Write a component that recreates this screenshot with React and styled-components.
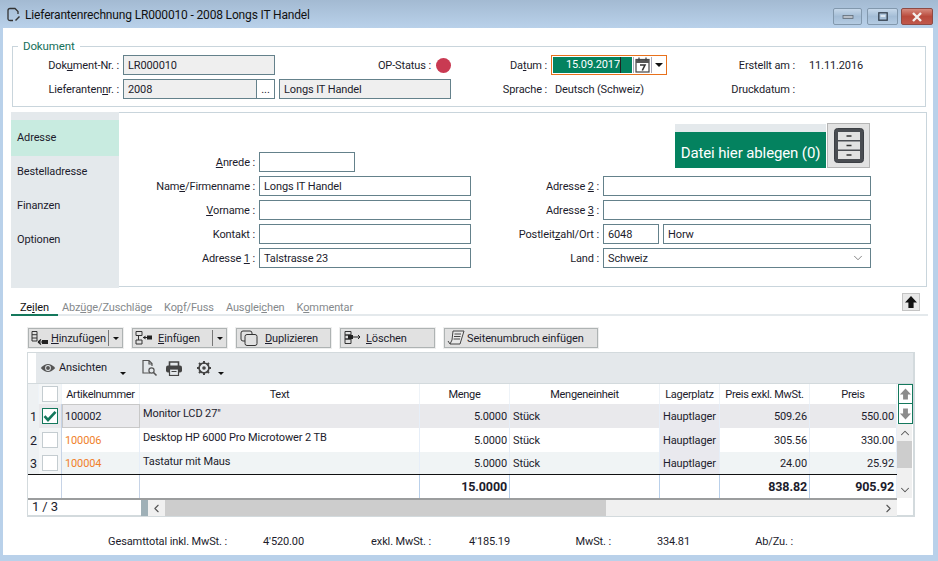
import React from "react";
import styled, { createGlobalStyle } from "styled-components";
import { ChevronDown, ChevronUp, ChevronLeft, ChevronRight } from "lucide-react";

const Global = createGlobalStyle`
  html, body { margin: 0; padding: 0; background: #b9d1ea; }
  body { font-family: Roboto, "Liberation Sans", Arial, sans-serif; font-size: 11px; letter-spacing: -.12px; color: #1c1c2c; overflow: hidden; }
  u { text-underline-offset: 1px; }
`;

const Win = styled.div`
  width: 938px; height: 561px; display: flex; flex-direction: column;
  background: #b9d1ea; box-sizing: border-box; overflow: hidden;
`;
const TitleBar = styled.header`
  height: 28px; flex: none; display: flex; align-items: center; padding: 2px 5px 0 6px; box-sizing: border-box;
  background: linear-gradient(#a3bad2, #b9d1ea);
`;
const TitleIcon = styled.svg`width: 15px; height: 16px; margin-right: 4px; flex: none;`;
const Title = styled.h1`
  margin: 0; font-weight: 400; font-size: 12px; letter-spacing: -.16px; color: #111; flex: 1;
`;
const WinButtons = styled.div`display: flex; align-self: flex-start; margin-top: 6px;`;
const WinBtn = styled.div`
  width: ${p => p.$w}px; height: 17px; margin-left: ${p => p.$ml}px; box-sizing: border-box; border: 1px solid ${p => (p.$close ? "#8e4a44" : "#8298ad")};
  border-radius: 2px; display: flex; align-items: center; justify-content: center;
  background: ${p => (p.$close ? "linear-gradient(#d68a7e, #b94a3c 50%, #c0584c)" : "linear-gradient(#c6d8ea, #a4bdd6 50%, #b4cbe2)")};
`;
const Content = styled.main`
  flex: 1; margin: 0 5px 6px 3px; background: #fff; display: flex; flex-direction: column;
  padding: 0 6px 0 8px; min-height: 0;
`;
const DocPanel = styled.section`
  position: relative; margin: 18px 1px 0 1px; height: 61px; box-sizing: border-box;
  border: 1px solid #c9d5dc; padding-top: 8px;
  display: grid; grid-template-columns: 106px 328px 92px 116px 124px 1fr; grid-auto-rows: 20px; gap: 4px;
`;
const Legend = styled.span`
  position: absolute; left: 5px; top: -8px; background: #fff; padding: 0 5px; color: #15705a; line-height: 14px; font-size: 11.5px;
`;
const Lbl = styled.label`
  display: flex; align-items: center; justify-content: flex-end; white-space: pre; padding-right: ${p => p.$pr || 0}px;
`;
const Plain = styled.span`
  display: flex; align-items: center; padding-left: ${p => p.$pl || 0}px; white-space: pre;
`;
const Input = styled.div`
  box-sizing: border-box; height: 20px; width: ${p => (p.$w ? p.$w + "px" : "100%")}; flex: ${p => (p.$grow ? 1 : "none")};
  border: 1px solid #64818b; background: ${p => (p.$ro ? "#efefef" : "#fff")};
  display: flex; align-items: center; padding: 0 4px; white-space: pre;
`;
const SpaceRow = styled.div`display: flex; align-items: center; justify-content: space-between;`;
const GapRow = styled.div`display: flex; align-items: center; gap: ${p => p.$gap || 0}px;`;
const Dot = styled.span`width: 15px; height: 15px; border-radius: 50%; background: #c93a52; margin-left: 5px; flex: none;`;
const DotWrap = styled.span`display: flex; align-items: center;`;
const Dots = styled.div`
  box-sizing: border-box; width: 18px; height: 20px; border: 1px solid #64818b; border-left: 0; margin-right: 4px;
  display: flex; align-items: flex-end; justify-content: center; padding-bottom: 4px; font-size: 11px; line-height: 8px; flex: none;
`;
const DateBox = styled.div`
  box-sizing: border-box; height: 20px; width: 116px; border: 1px solid #e8711c; padding: 1px; display: flex; align-items: stretch;
`;
const DateVal = styled.div`
  width: 79px; background: #04825f; color: #fff; text-align: right; line-height: 16px; box-sizing: border-box; padding-right: 12px;
  position: relative;
  &::after { content: ""; position: absolute; right: 11px; top: 0; bottom: 0; width: 1px; background: #222; }
`;
const CalBtn = styled.div`
  flex: none; width: 17px; margin-left: 1px; border-left: 1px solid #aab; border-right: 1px solid #aab;
  display: flex; align-items: center; justify-content: center;
`;
const Caret = styled.i`
  display: block; width: 0; height: 0; border-left: ${p => p.$s || 3}px solid transparent; border-right: ${p => p.$s || 3}px solid transparent;
  border-top: ${p => p.$s || 3}px solid #111; flex: none;
`;
const CaretCell = styled.div`flex: 1; display: flex; align-items: center; justify-content: center;`;

const AddrPanel = styled.section`display: flex; margin-top: 5px; height: 176px; flex: none;`;
const Nav = styled.nav`
  width: 108px; flex: none; background: #e4e9ec; padding-top: 8px; box-sizing: border-box;
`;
const NavItem = styled.div`
  height: ${p => (p.$on ? 36 : 34)}px; line-height: ${p => (p.$on ? 36 : 32)}px; padding-left: 6px; background: ${p => (p.$on ? "#c8ebe0" : "transparent")};
`;
const FormGrid = styled.div`
  flex: 1; height: 175px; box-sizing: border-box; border: 1px solid #c9d5dc; border-left: 0; padding-top: 10px;
  display: grid; grid-template-columns: 136px 212px 124px 268px; grid-template-rows: 25px repeat(5, 20px); column-gap: 4px; row-gap: 4px; align-content: start;
`;
const DropArea = styled.div`
  grid-column: 4; grid-row: 1 / span 2; display: flex; justify-content: flex-end; align-items: flex-start; gap: 1px; padding-right: 1px; height: 46px;
`;
const Drop = styled.div`
  width: 151px; height: 44px; margin-top: 1px; box-sizing: border-box; border-top: 8px solid #e4e9ec; background: #04825f; color: #fff;
  font-size: 15px; display: flex; align-items: center; justify-content: center; white-space: pre; padding-top: 6px;
`;
const CabinetBtn = styled.div`
  width: 43px; height: 45px; box-sizing: border-box; border: 1px solid #b5b5b5; background: #e2e2e2; display: flex; align-items: center; justify-content: center;
`;
const Col = styled.div`grid-column: ${p => p.$c}; grid-row: ${p => p.$r}; min-width: 0;`;
const SelectChevron = styled(ChevronDown)`margin-left: auto; margin-right: 1px; color: #555;`;

const TabBar = styled.div`
  position: relative; height: 26px; flex: none; display: flex; align-items: flex-end; border-bottom: 2px solid #e4e9ec; margin-right: -1px;
`;
const Tab = styled.div`
  height: 26px; box-sizing: border-box; margin-bottom: -2px; border-bottom: 2px solid ${p => (p.$on ? "#14785c" : "transparent")}; padding-top: 11px; line-height: 13px;
  padding-left: ${p => (p.$on ? 9 : 0)}px; padding-right: ${p => (p.$on ? 9 : 0)}px; margin-right: ${p => p.$mr}px; color: ${p => (p.$on ? "#111" : "#85898c")}; white-space: pre;
`;
const UpBtn = styled.div`
  position: absolute; right: 8px; top: 5px; width: 18px; height: 18px; box-sizing: border-box; border: 1px solid #c4c4c4; background: #e8e8e8;
  display: flex; align-items: center; justify-content: center;
`;
const BtnRow = styled.div`display: flex; gap: 9px; margin: 12px 0 0 17px; flex: none;`;
const TBtn = styled.button`
  all: unset; box-sizing: border-box; height: 20px; width: ${p => p.$w}px; background: #e1e1e1; border: 1px solid #aeb3b3; box-shadow: 0 0 0 1px #eeeeee;
  display: flex; align-items: center; padding-left: ${p => p.$pl ?? 2}px; white-space: pre; color: #1c1c2c; font: inherit; letter-spacing: -.12px;
`;
const BtnIcon = styled.svg`width: 18px; height: 16px; flex: none; margin-right: ${p => p.$mr ?? 6}px;`;
const Split = styled.span`
  margin-left: auto; width: 13px; height: 16px; border-left: 1px solid #777; display: flex; align-items: center; justify-content: center; flex: none;
`;
const GridPanel = styled.section`
  margin: 4px 0 0 16px; width: 888px; height: 165px; box-sizing: border-box; flex: none; border: 1px solid #d3dadd; border-width: 1px 2px 2px 1px;
  display: flex; flex-direction: column;
`;
const GridBar = styled.div`
  height: 30px; margin-left: 8px; background: #e4e8eb; display: flex; align-items: center; flex: none;
`;
const BarIcon = styled.svg`flex: none; display: block;`;
const BarText = styled.span`margin: 0 13px 0 3px; position: relative; top: -1px;`;
const GridMain = styled.div`display: flex; height: 114px; flex: none; border-top: 1px solid #d3dadd;`;
const cols = "11px 23px 78px 280px 90px 150px 60px 90px 87px";
const TableWrap = styled.div`width: 869px; flex: none; display: flex; flex-direction: column;`;
const Row = styled.div`
  display: grid; grid-template-columns: ${cols}; height: ${p => p.$h}px; flex: none; background: ${p => p.$bg || "#fff"};
  border-top: ${p => (p.$rule ? "1px solid #111" : "0")};
`;
const Cell = styled.div`
  display: flex; align-items: ${p => (p.$top ? "flex-start" : "center")}; justify-content: ${p => ({ r: "flex-end", c: "center" }[p.$a] || "flex-start")};
  padding: ${p => (p.$top ? "3px" : "0")} ${p => (p.$a === "r" ? "2px" : "0")} 0 ${p => (p.$a === "r" || p.$a === "c" ? "0" : "3px")};
  box-sizing: border-box; min-width: 0; white-space: pre;
  background: ${p => p.$bg || "transparent"}; color: ${p => p.$color || "inherit"};
  font-weight: ${p => (p.$bold ? 700 : 400)}; font-size: ${p => (p.$bold ? "12.5px" : "11px")};
  border-right: 1px solid ${p => p.$line || "#e6eef8"};
  outline: ${p => (p.$box ? "1px solid #c8c8c8" : "0")}; outline-offset: -1px;
`;
const Head = styled(Cell)`padding: 0; border-right: 1px solid #eef3f8; letter-spacing: -.3px;`;
const Check = styled.span`
  width: 16px; height: 16px; box-sizing: border-box; background: #fff; border: 1px solid ${p => (p.$on ? "#14785c" : "#c4ccd0")}; display: flex; align-items: center; justify-content: center;
`;
const RowNum = styled(Cell)`font-size: 12.5px; padding: 1px 0 0 2px; background: #eef1f3; border-right: 0;`;
const Side = styled.div`width: 16px; flex: none; display: flex; flex-direction: column; margin-left: 1px;`;
const SideBtn = styled.div`
  height: 20px; width: 15px; box-sizing: border-box; border: 1px solid #14785c; display: flex; align-items: center; justify-content: center; background: #fff; flex: none;
  & + & { border-top-width: 0; height: 20px; }
`;
const VTrack = styled.div`
  flex: 1; width: 15px; background: #f0f0f0; display: flex; flex-direction: column; align-items: center; color: #555; margin-left: -1px;
`;
const VThumb = styled.div`width: 100%; height: 27px; background: #cdcdcd; margin: 0 0 auto;`;
const HBar = styled.div`display: flex; height: 16px; border-top: 2px solid #9b9d9e; flex: none; width: 869px;`;
const Pager = styled.div`width: 113px; flex: none; padding-left: 4px; box-sizing: border-box; line-height: 13px; font-size: 13px;`;
const PagerEdge = styled.div`width: 7px; background: #9fb0b7; flex: none;`;
const HTrack = styled.div`flex: 1; background: #f0f0f0; display: flex; align-items: center; color: #555;`;
const HArrow = styled.div`width: 17px; flex: none; display: flex; align-items: center; justify-content: center;`;
const HThumb = styled.div`width: 441px; height: 100%; background: #cdcdcd; margin-right: auto; flex: none;`;
const Footer = styled.footer`
  display: grid; grid-template-columns: 216px 77px 127px 79px 101px 79px 103px; margin-top: 18px; line-height: 14px;
`;
const FootCell = styled.span`text-align: right; white-space: pre;`;

const ArrowUp = ({ c = "#111", flip }) => (
  <svg width="14" height="14" viewBox="0 0 14 14" style={flip ? { transform: "scaleY(-1)" } : undefined}>
    <path d="M7 1 L13 7.5 H9.6 V13 H4.4 V7.5 H1 Z" fill={c} />
  </svg>
);
const row = (num, on, art, artColor, text, bg) => (
  <Row $h={num === 3 ? 22 : 24} $bg={bg} key={num}>
    <RowNum>{num}</RowNum>
    <Cell $a="c" $bg={on ? "#e9e9ec" : "#f4f6f7"} $line="#c6d3e6">
      <Check $on={on}>
        {on && (
          <svg width="14" height="12" viewBox="0 0 14 12"><path d="M1.5 6.2 L5 10 L12.5 1.8" fill="none" stroke="#14785c" strokeWidth="2.6" /></svg>
        )}
      </Check>
    </Cell>
    <Cell $color={artColor} $box={on}>{art}</Cell>
    <Cell $top>{text}</Cell>
    <Cell $a="r">5.0000</Cell>
    <Cell>Stück</Cell>
    <Cell $bg="#e9e9ee">Hauptlager</Cell>
    <Cell $a="r">{num === 1 ? "509.26" : num === 2 ? "305.56" : "24.00"}</Cell>
    <Cell $a="r">{num === 1 ? "550.00" : num === 2 ? "330.00" : "25.92"}</Cell>
  </Row>
);

export default function App() {
  return (
    <Win>
      <Global />
      <TitleBar>
        <TitleIcon viewBox="0 0 15 16">
          <path d="M2 12 V3.5 Q2 1.5 4 1.5 H9 L12 4.5 V7 M2 12 Q2 13.5 4 13.5 H7" fill="none" stroke="#333" strokeWidth="1.3" />
          <path d="M9 13 L13 9 L14 10 L10 14 Z" fill="#333" />
        </TitleIcon>
        <Title>Lieferantenrechnung LR000010 - 2008 Longs IT Handel</Title>
        <WinButtons>
          <WinBtn $w={29} $ml={0}><svg width="12" height="6" viewBox="0 0 12 6"><rect x="1" y="1.5" width="10" height="3" fill="#b8bfc8" stroke="#5f6b78" strokeWidth=".8" /></svg></WinBtn>
          <WinBtn $w={31} $ml={5}><svg width="10" height="9" viewBox="0 0 10 9"><rect x=".8" y=".8" width="8.4" height="7.4" fill="none" stroke="#333f4d" strokeWidth="1.3" /><rect x="2.6" y="3" width="4.8" height="2" fill="#dfe8f2" /></svg></WinBtn>
          <WinBtn $w={32} $ml={3} $close><svg width="12" height="10" viewBox="0 0 12 10"><path d="M2 1 L10 9 M10 1 L2 9" stroke="#f4f0ee" strokeWidth="2.4" /></svg></WinBtn>
        </WinButtons>
      </TitleBar>
      <Content>
        <DocPanel>
          <Legend>Dokument</Legend>
          <Lbl>Dok<u>u</u>ment-Nr. :</Lbl>
          <SpaceRow>
            <Input $ro $w={152}>LR000010</Input>
            <DotWrap>OP-Status :<Dot /></DotWrap>
          </SpaceRow>
          <Lbl>Da<u>t</u>um :</Lbl>
          <DateBox>
            <DateVal>15.09.2017</DateVal>
            <CalBtn>
              <svg width="15" height="16" viewBox="0 0 15 16">
                <rect x="1" y="2.5" width="13" height="12.5" fill="#fff" stroke="#444" strokeWidth="1.2" />
                <rect x="1" y="2.5" width="13" height="3.5" fill="#555" />
                <path d="M4 .5 V4 M11 .5 V4" stroke="#444" strokeWidth="1.3" />
                <path d="M5 8 H10 L7.3 13.5" fill="none" stroke="#333" strokeWidth="1.6" />
              </svg>
            </CalBtn>
            <CaretCell><Caret $s={4} /></CaretCell>
          </DateBox>
          <Lbl>Erstellt am :</Lbl>
          <Plain $pl={10}>11.11.2016</Plain>

          <Lbl>Lieferanten<u>n</u>r. :</Lbl>
          <GapRow>
            <Input $ro $w={134}>2008</Input>
            <Dots>...</Dots>
            <Input $ro $w={172}>Longs IT Handel</Input>
          </GapRow>
          <Lbl>Sprache :</Lbl>
          <Plain $pl={4}>Deutsch (Schweiz)</Plain>
          <Lbl>Druckdatum :</Lbl>
          <Plain />
        </DocPanel>

        <AddrPanel>
          <Nav>
            <NavItem $on>Adresse</NavItem>
            <NavItem>Bestelladresse</NavItem>
            <NavItem>Finanzen</NavItem>
            <NavItem>Optionen</NavItem>
          </Nav>
          <FormGrid>
            <DropArea>
              <Drop>Datei hier ablegen (0)</Drop>
              <CabinetBtn>
                <svg width="32" height="37" viewBox="0 0 32 37">
                  <rect x="1.5" y="1.5" width="29" height="34" rx="3" fill="#4a4d52" stroke="#3c3f44" />
                  <rect x="5" y="5" width="22" height="8" fill="#e2e2e2" />
                  <rect x="5" y="14.5" width="22" height="8" fill="#e2e2e2" />
                  <rect x="5" y="24" width="22" height="8" fill="#e2e2e2" />
                  <path d="M13.5 9 H18.5 M13.5 18.5 H18.5 M13.5 28 H18.5" stroke="#333" strokeWidth="1.6" />
                </svg>
              </CabinetBtn>
            </DropArea>
            <Col $c={1} $r={2} as={Lbl}><u>A</u>nrede :</Col>
            <Col $c={2} $r={2}><Input $w={96} /></Col>
            <Col $c={1} $r={3} as={Lbl}>Nam<u>e</u>/Firmenname :</Col>
            <Col $c={2} $r={3}><Input>Longs IT Handel</Input></Col>
            <Col $c={1} $r={4} as={Lbl}><u>V</u>orname :</Col>
            <Col $c={2} $r={4}><Input /></Col>
            <Col $c={1} $r={5} as={Lbl}>Kontakt :</Col>
            <Col $c={2} $r={5}><Input /></Col>
            <Col $c={1} $r={6} as={Lbl}>Adresse <u>1</u> :</Col>
            <Col $c={2} $r={6}><Input>Talstrasse 23</Input></Col>

            <Col $c={3} $r={3} as={Lbl} $pr={2}>Adresse <u>2</u> :</Col>
            <Col $c={4} $r={3}><Input /></Col>
            <Col $c={3} $r={4} as={Lbl} $pr={2}>Adresse <u>3</u> :</Col>
            <Col $c={4} $r={4}><Input /></Col>
            <Col $c={3} $r={5} as={Lbl} $pr={2}>Postleit<u>z</u>ahl/Ort :</Col>
            <Col $c={4} $r={5}>
              <GapRow $gap={4}><Input $w={56}>6048</Input><Input $grow>Horw</Input></GapRow>
            </Col>
            <Col $c={3} $r={6} as={Lbl} $pr={2}>Land :</Col>
            <Col $c={4} $r={6}><Input>Schweiz<SelectChevron size={14} strokeWidth={1.2} /></Input></Col>
          </FormGrid>
        </AddrPanel>

        <TabBar>
          <Tab $on $mr={4}>Ze<u>i</u>len</Tab>
          <Tab $mr={12}>Abz<u>ü</u>ge/Zuschläge</Tab>
          <Tab $mr={12}>Ko<u>p</u>f/Fuss</Tab>
          <Tab $mr={12}>Ausglei<u>c</u>hen</Tab>
          <Tab $mr={0}>K<u>o</u>mmentar</Tab>
          <UpBtn><ArrowUp /></UpBtn>
        </TabBar>

        <BtnRow>
          <TBtn $w={95}>
            <BtnIcon $mr={2} viewBox="0 0 18 16"><path d="M1 1.5 H6 V11 H1 Z M1 4.7 H6 M1 8 H6" fill="none" stroke="#333" /><path d="M7 12 H17 M7 12 L10 9.5 M7 12 L10 14.5" stroke="#222" strokeWidth="1.2" fill="none" /><rect x="11" y="10" width="6" height="4" fill="#222" /></BtnIcon>
            <u>H</u>inzufügen
            <Split><Caret /></Split>
          </TBtn>
          <TBtn $w={95}>
            <BtnIcon $mr={5} viewBox="0 0 18 16"><path d="M1 1.5 H7 V5.5 H1 Z M1 10 H7 V14 H1 Z M3.5 5.5 V10" fill="none" stroke="#333" /><path d="M8 7.5 H17" stroke="#222" /><path d="M8 7.5 L10.5 5.5 V9.5 Z" fill="#222" /><rect x="12" y="5.5" width="5" height="4" fill="#222" /></BtnIcon>
            <u>E</u>infügen
            <Split><Caret /></Split>
          </TBtn>
          <TBtn $w={95} $pl={3}>
            <BtnIcon $mr={7} viewBox="0 0 18 16"><rect x="1" y="1" width="11" height="10" rx="2" fill="none" stroke="#333" /><rect x="5" y="4.5" width="12" height="11" rx="2" fill="#e1e1e1" stroke="#333" /></BtnIcon>
            <u>D</u>uplizieren
          </TBtn>
          <TBtn $w={95}>
            <BtnIcon $mr={5} viewBox="0 0 18 16"><path d="M2 1.5 H8 V5 H2 Z M2 5 H8 V9 H2 Z M2 9 H8 V13.5 H2 Z" fill="none" stroke="#333" /><rect x="5" y="5" width="5" height="4" fill="#222" /><path d="M10 7 H17 M15 5 L17 7 L15 9" stroke="#222" fill="none" /></BtnIcon>
            <u>L</u>öschen
          </TBtn>
          <TBtn $w={154}>
            <BtnIcon $mr={2} viewBox="0 0 18 16"><path d="M6 1 H17 L13 14 H3 L5 10 Z" fill="#e8e8e8" stroke="#444" /><path d="M7.5 4 H14 M7 6.5 H13.5 M6.5 9 H13" stroke="#444" /><path d="M1 11 L3 14" stroke="#444" /></BtnIcon>
            Seitenumbruch einfügen
          </TBtn>
        </BtnRow>

        <GridPanel>
          <GridBar>
            <BarIcon width="16" height="12" viewBox="0 0 20 14" style={{ marginLeft: 4 }}>
              <path d="M1 7 Q10 -3 19 7 Q10 17 1 7 Z" fill="#555" />
              <circle cx="10" cy="7" r="3.6" fill="#e4e8eb" />
              <circle cx="10" cy="7" r="2.4" fill="#555" />
            </BarIcon>
            <BarText>Ansichten</BarText>
            <Caret style={{ marginTop: 10, marginRight: 15 }} />
            <BarIcon width="17" height="18" viewBox="0 0 17 18" style={{ marginRight: 8 }}>
              <path d="M9 14 H2 V1.5 H8 L11 4.5 V7 M8 1.5 V5 H11" fill="none" stroke="#555" strokeWidth="1.2" />
              <circle cx="10.5" cy="11.5" r="2.6" fill="none" stroke="#555" strokeWidth="1.2" />
              <path d="M12.5 13.5 L15.5 16.5" stroke="#555" strokeWidth="1.6" />
            </BarIcon>
            <BarIcon width="16" height="15" viewBox="0 0 16 15" style={{ marginRight: 15 }}>
              <path d="M3.5 5 V1 H12.5 V5" fill="none" stroke="#444" strokeWidth="1.6" />
              <rect x="0" y="4.5" width="16" height="7" rx="2" fill="#444" />
              <rect x="3.5" y="8" width="9" height="6.5" fill="#e4e8eb" stroke="#444" strokeWidth="1.2" />
              <path d="M5.5 10.5 H10.5" stroke="#444" />
            </BarIcon>
            <BarIcon width="14" height="14" viewBox="0 0 14 14" style={{ marginRight: 7 }}>
              <path d="M7 2 A5 5 0 1 1 6.99 2 Z" fill="none" stroke="#444" strokeWidth="1.6" />
              <path d="M7 0 V3 M7 11 V14 M0 7 H3 M11 7 H14 M2 2 L4 4 M10 10 L12 12 M12 2 L10 4 M2 12 L4 10" stroke="#444" strokeWidth="2" />
              <circle cx="7" cy="7" r="1.8" fill="#444" />
            </BarIcon>
            <Caret style={{ marginTop: 10 }} />
          </GridBar>
          <GridMain>
            <TableWrap>
              <Row $h={20}>
                <Head $bg="#eef1f3" />
                <Head $a="c" $bg="#f4f6f7"><Check /></Head>
                <Head $a="c">Artikelnummer</Head>
                <Head $a="c">Text</Head>
                <Head $a="c">Menge</Head>
                <Head $a="c">Mengeneinheit</Head>
                <Head $a="c">Lagerplatz</Head>
                <Head $a="c">Preis exkl. MwSt.</Head>
                <Head $a="c">Preis</Head>
              </Row>
              {row(1, true, "100002", undefined, 'Monitor LCD 27"', "#e9e9ec")}
              {row(2, false, "100006", "#f07f2a", "Desktop HP 6000 Pro Microtower 2 TB", "#fff")}
              {row(3, false, "100004", "#f07f2a", "Tastatur mit Maus", "#f0f4f5")}
              <Row $h={23} $rule>
                <Cell $line="transparent" />
                <Cell $line="#c6d3e6" />
                <Cell $line="#c6d3e6" />
                <Cell $line="#b9d0ea" />
                <Cell $a="r" $bold $line="#b9d0ea">15.0000</Cell>
                <Cell $line="#b9d0ea" />
                <Cell $line="#b9d0ea" />
                <Cell $a="r" $bold $line="#b9d0ea">838.82</Cell>
                <Cell $a="r" $bold>905.92</Cell>
              </Row>
            </TableWrap>
            <Side>
              <SideBtn><ArrowUp c="#8c8c8c" /></SideBtn>
              <SideBtn><ArrowUp c="#8c8c8c" flip /></SideBtn>
              <VTrack>
                <ChevronUp size={14} strokeWidth={1.8} style={{ margin: "2px 0 1px" }} />
                <VThumb />
                <ChevronDown size={14} strokeWidth={1.8} style={{ marginBottom: 1 }} />
              </VTrack>
            </Side>
          </GridMain>
          <HBar>
            <Pager>1 / 3</Pager>
            <PagerEdge />
            <HTrack>
              <HArrow><ChevronLeft size={13} strokeWidth={2} /></HArrow>
              <HThumb />
              <HArrow><ChevronRight size={13} strokeWidth={2} /></HArrow>
            </HTrack>
          </HBar>
        </GridPanel>

        <Footer>
          <FootCell>Gesamttotal inkl. MwSt. :</FootCell>
          <FootCell>4'520.00</FootCell>
          <FootCell>exkl. MwSt. :</FootCell>
          <FootCell>4'185.19</FootCell>
          <FootCell>MwSt. :</FootCell>
          <FootCell>334.81</FootCell>
          <FootCell>Ab/Zu. :</FootCell>
        </Footer>
      </Content>
    </Win>
  );
}
